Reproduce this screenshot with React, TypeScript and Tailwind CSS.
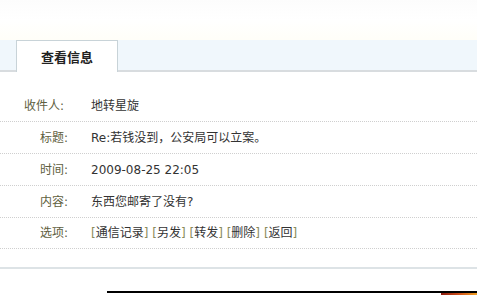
const rows: { label: string; value: React.ReactNode; pr?: string }[] = [
  { label: "收件人:", value: "地转星旋", pr: "pr-[4px]" },
  { label: "标题:", value: "Re:若钱没到，公安局可以立案。" },
  { label: "时间:", value: "2009-08-25 22:05" },
  { label: "内容:", value: "东西您邮寄了没有?" },
];

const options = ["通信记录", "另发", "转发", "删除", "返回"];

export default function App() {
  return (
    <div className="w-[477px] h-[295px] overflow-hidden bg-white text-[12px] text-[#333] font-['DejaVu_Sans','Noto_Sans_CJK_SC',sans-serif]">
      <div className="h-[40px] bg-gradient-to-b from-[#fcfcfc] via-white to-[#fffef8]" />

      <div className="flex h-[32px] bg-[#f0f7fc] border-b-2 border-[#d8dcdf]">
        <div className="w-[16px]" />
        <div className="w-[102px] -mb-[2px] bg-white border border-b-0 border-[#c8d3d8] flex items-center justify-center font-bold text-[13px] text-[#222] font-['Noto_Sans_CJK_SC',sans-serif]">
          查看信息
        </div>
      </div>

      <div className="pt-[18px]">
        {rows.map((r) => (
          <div key={r.label} className="flex items-center h-[32px] border-b border-dotted border-[#cfcfcf]">
            <div className={`w-[68px] text-right text-[#5e5e40] ${r.pr ?? ""}`}>{r.label}</div>
            <div className="pl-[23px]">{r.value}</div>
          </div>
        ))}
        <div className="flex items-center h-[31px] border-b border-dotted border-[#cfcfcf]">
          <div className="w-[68px] text-right text-[#5e5e40]">选项:</div>
          <div className="pl-[23px] whitespace-pre">
            {options.map((o, i) => (
              <span key={o}>
                {i > 0 ? " " : ""}
                <span className="text-[#8a8a5a]">[</span>
                {o}
                <span className="text-[#8a8a5a]">]</span>
              </span>
            ))}
          </div>
        </div>
      </div>

      <div className="mt-[18px] border-t-2 border-[#dde3e6]" />

      <div className="mt-[22px] ml-[107px] flex h-[6px] border-t-2 border-black">
        <div className="flex-1" />
        <div className="w-[36px] bg-gradient-to-r from-[#8a1a10] via-[#d0501a] to-[#f0a020]" />
      </div>
    </div>
  );
}
